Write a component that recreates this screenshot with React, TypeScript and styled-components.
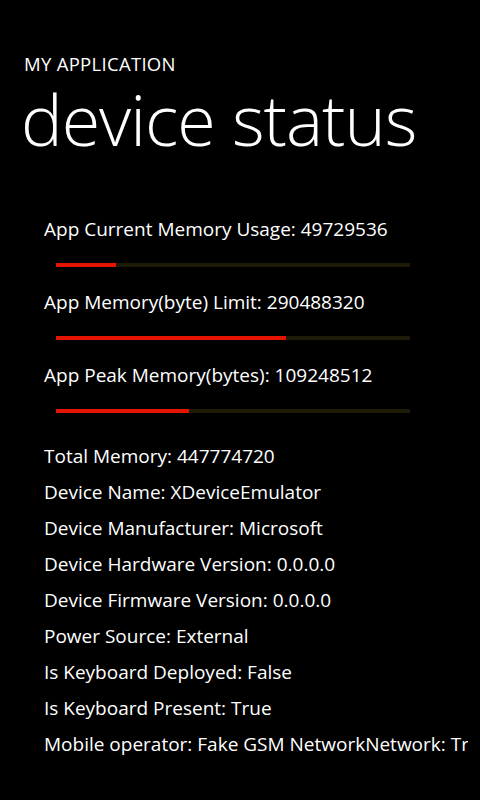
import React from "react";
import styled, { createGlobalStyle } from "styled-components";

const GlobalStyle = createGlobalStyle`
    html, body {
        margin: 0;
        padding: 0;
        background: #000;
    }
    body {
        font-family: "Open Sans", "Noto Sans", sans-serif;
        color: #fff;
    }
`;

const Page = styled.div`
    width: 480px;
    height: 800px;
    background: #000;
    overflow: hidden;
    display: flex;
    flex-direction: column;
`;

const TitlePanel = styled.header`
    padding: 52px 0 0 24px;
`;

const AppName = styled.div`
    font-size: 18.5px;
    line-height: 24px;
    letter-spacing: 0.3px;
`;

const PageTitle = styled.h1`
    margin: 3px 0 0 -3px;
    font-size: 70px;
    font-weight: 300;
    line-height: 80px;
    letter-spacing: -1px;
`;

const Content = styled.main`
    margin: 52px 0 0 44px;
    width: 424px;
    overflow: hidden;
    display: flex;
    flex-direction: column;
`;

const MemoryBlock = styled.div`
    display: flex;
    flex-direction: column;
    height: 73px;
`;

const Label = styled.div`
    font-size: 19px;
    line-height: 36px;
    white-space: nowrap;
`;

const Track = styled.div`
    margin: 16px 0 0 12px;
    width: 354px;
    height: 4px;
    background: #1e1a08;
`;

const Fill = styled.div`
    height: 100%;
    background: #e51400;
`;

const InfoList = styled.div`
    display: flex;
    flex-direction: column;
    margin-top: 8px;
`;

const memory = [
    { label: "App Current Memory Usage: 49729536", fill: 60 },
    { label: "App Memory(byte) Limit: 290488320", fill: 230 },
    { label: "App Peak Memory(bytes): 109248512", fill: 133 },
];

const info = [
    "Total Memory: 447774720",
    "Device Name: XDeviceEmulator",
    "Device Manufacturer: Microsoft",
    "Device Hardware Version: 0.0.0.0",
    "Device Firmware Version: 0.0.0.0",
    "Power Source: External",
    "Is Keyboard Deployed: False",
    "Is Keyboard Present: True",
    "Mobile operator: Fake GSM NetworkNetwork: True",
];

export default function App() {
    return (
        <Page>
            <GlobalStyle />
            <TitlePanel>
                <AppName>MY APPLICATION</AppName>
                <PageTitle>device status</PageTitle>
            </TitlePanel>
            <Content>
                {memory.map((m) => (
                    <MemoryBlock key={m.label}>
                        <Label>{m.label}</Label>
                        <Track>
                            <Fill style={{ width: m.fill }} />
                        </Track>
                    </MemoryBlock>
                ))}
                <InfoList>
                    {info.map((t) => (
                        <Label key={t}>{t}</Label>
                    ))}
                </InfoList>
            </Content>
        </Page>
    );
}
